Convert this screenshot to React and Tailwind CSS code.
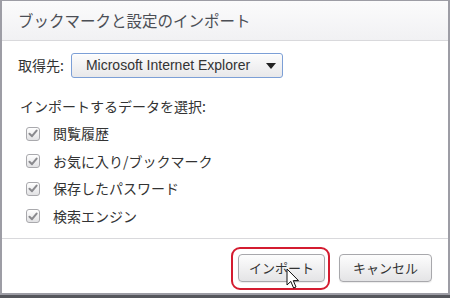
import React from 'react';

const jp = { fontFamily: '"Noto Sans CJK JP", "Liberation Sans", sans-serif' };

function CheckRow({ label }) {
  return (
    <div className="flex items-center h-[27.5px]">
      <span className="ml-[8px] w-[14px] h-[14px] rounded-[3px] border border-[#a9a9ad] bg-gradient-to-b from-[#ffffff] to-[#e2e2e4] flex items-center justify-center">
        <svg width="10" height="9" viewBox="0 0 10 9">
          <path d="M1.5 4.8 L4 7.2 L8.6 1.6" fill="none" stroke="#8a8a8e" strokeWidth="2" strokeLinecap="round" strokeLinejoin="round" />
        </svg>
      </span>
      <span className="ml-[13px] text-[14px] text-[#333]">{label}</span>
    </div>
  );
}

export default function App() {
  const items = ['閲覧履歴', 'お気に入り/ブックマーク', '保存したパスワード', '検索エンジン'];

  return (
    <div className="w-[450px] h-[298px] bg-[#55575c] overflow-hidden" style={jp}>
      <div className="h-[295px] bg-white border-x-2 border-t border-b-2 border-[#9d9da5] flex flex-col">
        {/* Title */}
        <div className="h-[40px] shrink-0 bg-gradient-to-b from-[#fbfbfc] to-[#f1f1f3] border-b border-[#d9d9dc] flex items-center pl-[16px]">
          <span className="text-[15.5px] text-[#4b4e55] leading-none">ブックマークと設定のインポート</span>
        </div>

        {/* Body */}
        <div className="flex-1 flex flex-col pl-[16px]">
          <div className="flex items-center mt-[12px] h-[25px]">
            <span className="text-[14px] text-[#333]">取得先:</span>
            <div className="ml-[7px] w-[212px] h-[25px] rounded-[3px] border border-[#7c9fd6] bg-gradient-to-b from-[#fcfcfc] to-[#e8e8ea] flex items-center justify-between pl-[14px] pr-[6px] shadow-[inset_0_1px_0_#ffffff]">
              <span className="text-[14px] text-[#333]" style={{ fontFamily: '"Liberation Sans", Arial, sans-serif' }}>
                Microsoft Internet Explorer
              </span>
              <svg width="10" height="6" viewBox="0 0 10 6">
                <path d="M0 0 H10 L5 6 Z" fill="#222" />
              </svg>
            </div>
          </div>

          <div className="mt-[18px] text-[14px] text-[#333] h-[20px] flex items-center pl-[2px]">インポートするデータを選択:</div>

          <div className="mt-[4px] flex flex-col">
            {items.map((it) => (
              <CheckRow key={it} label={it} />
            ))}
          </div>
        </div>

        {/* Footer */}
        <div className="h-[55px] shrink-0 border-t border-[#d9d9dc] flex justify-end items-start pt-[15px] pr-[16px] gap-[14px]">
          <div className="relative">
            <button className="w-[87px] h-[28px] rounded-[4px] border border-[#a8a8ac] bg-gradient-to-b from-[#fdfdfd] to-[#e4e4e6] text-[13px] text-[#333] shadow-[0_1px_1px_rgba(0,0,0,0.08)]" style={jp}>
              インポート
            </button>
            <div className="absolute left-[-7px] right-[-5px] top-[-7px] bottom-[-8px] rounded-[9px] border-2 border-[#d41c30] pointer-events-none" />
            <svg className="absolute left-[48px] top-[14px]" width="14" height="22" viewBox="0 0 14 22">
              <path d="M1 1 L1 17 L4.8 13.4 L7.6 20 L10 19 L7.3 12.6 L12.5 12.6 Z" fill="#ffffff" stroke="#111" strokeWidth="1" strokeLinejoin="round" />
            </svg>
          </div>
          <button className="w-[93px] h-[28px] rounded-[4px] border border-[#a8a8ac] bg-gradient-to-b from-[#fdfdfd] to-[#e4e4e6] text-[13px] text-[#333] shadow-[0_1px_1px_rgba(0,0,0,0.08)]" style={jp}>
            キャンセル
          </button>
        </div>
      </div>
    </div>
  );
}
